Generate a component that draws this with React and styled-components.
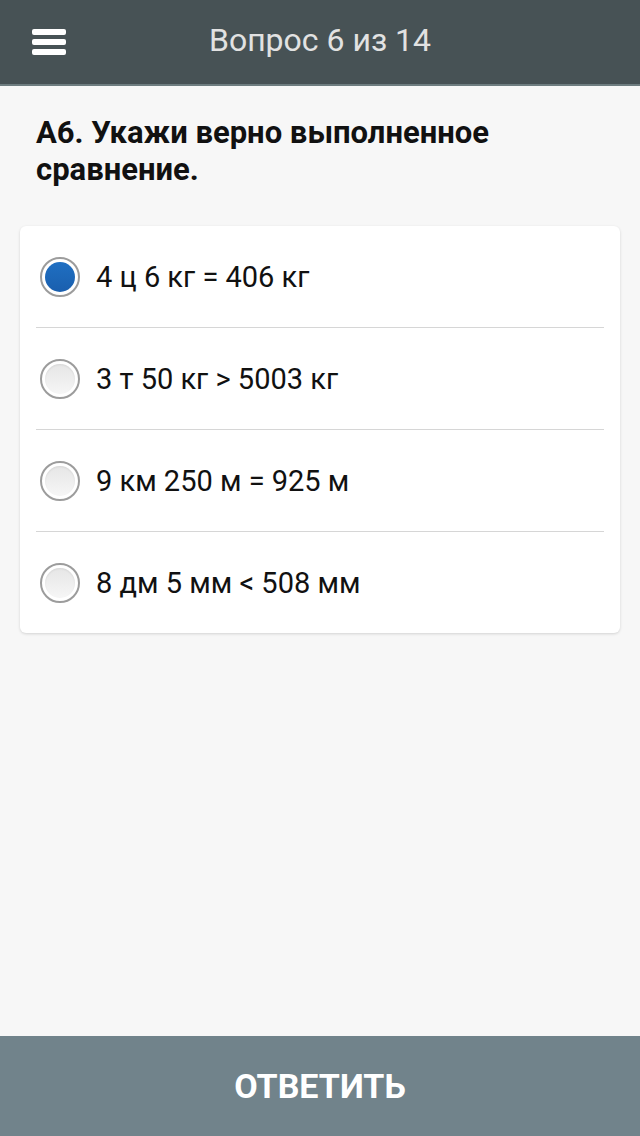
import { createGlobalStyle } from "styled-components";
import styled from "styled-components";

const GlobalStyle = createGlobalStyle`
  html, body {
    margin: 0;
    padding: 0;
    background: #f7f7f7;
    font-family: Roboto, "Liberation Sans", Arial, sans-serif;
  }
`;

const Screen = styled.div`
  height: 1136px;
  display: flex;
  flex-direction: column;
  background: #f7f7f7;
`;

const Header = styled.header`
  height: 84px;
  flex-shrink: 0;
  background: #475255;
  border-bottom: 2px solid #6e7d80;
  display: flex;
  align-items: center;
  position: relative;
`;

const MenuButton = styled.div`
  width: 34px;
  margin-left: 32px;
  display: flex;
  flex-direction: column;
  gap: 4px;
  span {
    display: block;
    height: 6px;
    border-radius: 2px;
    background: #fff;
  }
`;

const Title = styled.h1`
  position: absolute;
  left: 0;
  right: 0;
  text-align: center;
  margin: 0;
  font-size: 32px;
  font-weight: normal;
  color: #e2e2e2;
  pointer-events: none;
  padding-bottom: 4px;
`;

const Content = styled.main`
  flex: 1;
  padding: 28px 20px 0;
`;

const Question = styled.h2`
  margin: 0 0 38px 16px;
  font-size: 31px;
  line-height: 37px;
  font-weight: bold;
  color: #111;
`;

const Card = styled.div`
  background: #fff;
  border-radius: 6px;
  box-shadow: 0 1px 3px rgba(0, 0, 0, 0.15);
  padding: 0 16px;
`;

const Row = styled.label`
  display: flex;
  align-items: center;
  gap: 16px;
  height: 101px;
  border-top: ${({ first }) => (first ? "none" : "1px solid #d6d6d6")};
  font-size: 29px;
  color: #111;
`;

const Radio = styled.span`
  width: 36px;
  height: 36px;
  margin-left: 4px;
  border-radius: 50%;
  border: 2px solid #9c9c9c;
  display: flex;
  align-items: center;
  justify-content: center;
  flex-shrink: 0;
  background: #fff;
  &::after {
    content: "";
    width: 30px;
    height: 30px;
    border-radius: 50%;
    background: ${({ checked }) =>
      checked
        ? "linear-gradient(#1f6fc2, #1a5fae)"
        : "linear-gradient(#e6e6e6, #f6f6f6)"};
    box-shadow: ${({ checked }) =>
      checked ? "none" : "inset 0 1px 2px rgba(0,0,0,0.08)"};
  }
`;

const SubmitBar = styled.button`
  height: 100px;
  flex-shrink: 0;
  border: none;
  background: #71838b;
  color: #fff;
  font-family: inherit;
  font-size: 34px;
  font-weight: bold;
`;

const answers = [
  "4 ц 6 кг = 406 кг",
  "3 т 50 кг > 5003 кг",
  "9 км 250 м = 925 м",
  "8 дм 5 мм < 508 мм",
];

export default function App() {
  return (
    <>
      <GlobalStyle />
      <Screen>
        <Header>
          <MenuButton>
            <span />
            <span />
            <span />
          </MenuButton>
          <Title>Вопрос 6 из 14</Title>
        </Header>
        <Content>
          <Question>А6. Укажи верно выполненное сравнение.</Question>
          <Card>
            {answers.map((a, i) => (
              <Row key={a} first={i === 0}>
                <Radio checked={i === 0} />
                {a}
              </Row>
            ))}
          </Card>
        </Content>
        <SubmitBar>ОТВЕТИТЬ</SubmitBar>
      </Screen>
    </>
  );
}
